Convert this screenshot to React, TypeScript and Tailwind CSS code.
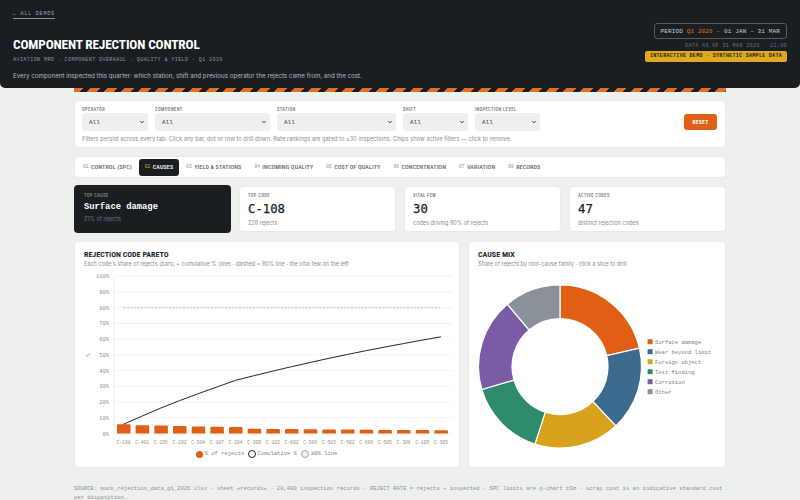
import { ChevronDown } from "lucide-react";

const mono = "font-['Liberation_Mono',monospace]";
const head = "font-['Roboto',sans-serif] [font-stretch:75%]";

const filters = [
  { label: "OPERATOR", width: "w-[66px]" },
  { label: "COMPONENT", width: "w-[115px]" },
  { label: "STATION", width: "w-[119px]" },
  { label: "SHIFT", width: "w-[65px]" },
  { label: "INSPECTION LEVEL", width: "w-[65px]" },
];

const tabs = [
  ["01", "CONTROL (SPC)"],
  ["02", "CAUSES"],
  ["03", "YIELD & STATIONS"],
  ["04", "INCOMING QUALITY"],
  ["05", "COST OF QUALITY"],
  ["06", "CONCENTRATION"],
  ["07", "VARIATION"],
  ["08", "RECORDS"],
];

const kpis = [
  { label: "TOP CODE", value: "C-108", sub: "228 rejects" },
  { label: "VITAL FEW", value: "30", sub: "codes driving 80% of rejects" },
  { label: "ACTIVE CODES", value: "47", sub: "distinct rejection codes" },
];

const codes = [
  "C-108", "C-401", "C-205", "C-202", "C-504", "C-107", "C-304", "C-309", "C-103",
  "C-602", "C-506", "C-503", "C-502", "C-606", "C-505", "C-306", "C-105", "C-305",
];
const shares = [5.9, 5.2, 5.1, 4.7, 4.4, 4.3, 4.2, 3.0, 2.9, 2.8, 2.7, 2.6, 2.5, 2.4, 2.3, 2.2, 2.2, 2.1];

// chart coords are page pixels minus the svg origin
const plotLeft = 39;
const slot = 18.67;
const yOf = (pct: number) => 165.5 - pct * 1.572;

const ParetoChart = () => {
  let total = 0;
  const points = shares.map((s, i) => {
    total += s;
    return `${plotLeft + 9.5 + i * slot},${yOf(total)}`;
  });
  return (
    <svg width="384" height="182" viewBox="0 0 384 182" className={`block ${mono}`}>
      {[0, 10, 20, 30, 40, 50, 60, 70, 80, 90, 100].map((t) => (
        <g key={t}>
          <line x1={plotLeft} x2={377} y1={yOf(t)} y2={yOf(t)} stroke="#eef0ee" strokeWidth="0.8" />
          <text x={plotLeft - 5} y={yOf(t) + 2} textAnchor="end" fontSize="5.4" fill="#8a8f94">
            {t}%
          </text>
        </g>
      ))}
      <line x1={plotLeft} x2={plotLeft} y1={yOf(100)} y2={yOf(0)} stroke="#e6e8e6" strokeWidth="0.8" />
      <text x={13} y={89} textAnchor="middle" fontSize="5.4" fill="#8a8f94" transform="rotate(-90 13 87)">
        %
      </text>
      <line x1={plotLeft + 9.5} x2={367} y1={yOf(80)} y2={yOf(80)} stroke="#a4a9ad" strokeWidth="0.7" strokeDasharray="2 1.5" />
      {shares.map((s, i) => {
        const h = s * 1.572;
        const x = plotLeft + 3 + i * slot;
        return <path key={i} d={`M${x} ${yOf(0)}v${-h + 1}q0 -1 1 -1h11.5q1 0 1 1v${h - 1}z`} fill="#e05f14" />;
      })}
      <polyline points={points.join(" ")} fill="none" stroke="#23272b" strokeWidth="1" />
      {codes.map((c, i) => (
        <text key={c} x={plotLeft + 9.5 + i * slot} y={176} textAnchor="middle" fontSize="4.67" fill="#8a8f94">
          {c}
        </text>
      ))}
    </svg>
  );
};

const slices = [
  { name: "Surface damage", from: 0, to: 77, color: "#e05f14" },
  { name: "Wear beyond limit", from: 77, to: 136.8, color: "#3d6a8f" },
  { name: "Foreign object", from: 136.8, to: 197.9, color: "#d9a21b" },
  { name: "Test finding", from: 197.9, to: 253.6, color: "#2e8b6d" },
  { name: "Corrosion", from: 253.6, to: 319.8, color: "#7b5aa6" },
  { name: "Other", from: 319.8, to: 360, color: "#8a9199" },
];

const polar = (r: number, deg: number) => {
  const a = (deg * Math.PI) / 180;
  return `${91 + r * Math.sin(a)} ${98.5 - r * Math.cos(a)}`;
};

const DonutChart = () => (
  <svg width="256" height="198" viewBox="0 0 256 198" className={`block ${mono}`}>
    {slices.map((s) => (
      <path
        key={s.name}
        d={`M${polar(81.5, s.from)}A81.5 81.5 0 0 1 ${polar(81.5, s.to)}L${polar(48, s.to)}A48 48 0 0 0 ${polar(48, s.from)}Z`}
        fill={s.color}
        stroke="#fff"
        strokeWidth="1.2"
      />
    ))}
    {slices.map((s, i) => (
      <g key={s.name}>
        <rect x={178.6} y={71.2 + i * 10} width="5" height="5" fill={s.color} />
        <text x={186} y={75.5 + i * 10} fontSize="5.5" fill="#7c8288">
          {s.name}
        </text>
      </g>
    ))}
  </svg>
);

export default function App() {
  return (
    <div className="min-h-screen bg-[#eef0ee] font-['Inter',sans-serif] text-[#1a1e23]">
      <header className="flex h-[88px] justify-between rounded-b-[5px] bg-[#1a1e23] pl-[13px] pr-[13px] pt-[10px]">
        <div>
          <a className={`${mono} mt-[1px] block w-fit border-b border-[#8b9096] text-[5px] leading-[7px] tracking-[0.8px] text-[#a2a7ac]`}>
            ← ALL DEMOS
          </a>
          <h1 className={`${head} mt-[17px] text-[13.3px] font-bold leading-[17px] tracking-[-0.15px] text-white`}>
            COMPONENT REJECTION CONTROL
          </h1>
          <p className={`${mono} mt-[3px] text-[5px] leading-[8px] tracking-[0.44px] text-[#8f949a]`}>
            AVIATION MRO · COMPONENT OVERHAUL · QUALITY &amp; YIELD · Q1 2026
          </p>
          <p className="mt-[7px] text-[6.2px] leading-[9px] text-[#b4b8bc]">
            Every component inspected this quarter: which station, shift and previous operator the rejects came from, and the cost.
          </p>
        </div>
        <div className={`${mono} flex flex-col items-end pt-[13px]`}>
          <div className="flex h-[16px] items-center rounded-[3px] border border-[#565b61] px-[6px] text-[6px] tracking-[0.13px] text-[#c9ccd0]">
            <span>PERIOD&nbsp;</span>
            <span className="text-[#e0701f]">Q1 2026</span>
            <span>&nbsp;· 01 JAN – 31 MAR</span>
          </div>
          <div className="mt-[3px] text-[5px] leading-[8px] tracking-[0.4px] text-[#6b7076]">DATA AS OF 31 MAR 2026 · 22:00</div>
          <div className="mt-[1px] flex h-[11px] items-center rounded-[2px] bg-[#e0a91f] px-[5px] text-[5px] font-bold tracking-[0.3px] text-[#1a1e23]">
            INTERACTIVE DEMO · SYNTHETIC SAMPLE DATA
          </div>
        </div>
      </header>

      <div className="mx-auto w-[652px]">
        <div className="h-[4px] bg-[repeating-linear-gradient(135deg,#e0701f_0,#e0701f_7px,#1a1e23_7px,#1a1e23_12px)]" />

        <main className="flex flex-col pt-[8px]">
          <section className="h-[48px] rounded-[4px] border border-[#e9ebe9] bg-white px-[7px] pt-[5px]">
            <div className="flex items-end gap-[7px]">
              {filters.map((f) => (
                <label key={f.label} className="flex flex-col">
                  <span className={`${head} text-[4.5px] font-medium leading-[7px] tracking-[0.4px] text-[#6d7379]`}>{f.label}</span>
                  <span className="relative block">
                    <select className={`${mono} ${f.width} block h-[18px] appearance-none rounded-[3px] bg-[#eef0ee] pl-[7px] text-[6px] text-[#3c4147]`}>
                      <option>All</option>
                    </select>
                    <ChevronDown size={6} strokeWidth={3.5} className="pointer-events-none absolute right-[3px] top-[6px] text-[#1a1e23]" />
                  </span>
                </label>
              ))}
              <button className={`${head} mb-[1px] ml-auto mr-[1px] h-[16px] w-[33px] rounded-[3px] bg-[#e05f14] text-[5.5px] font-bold tracking-[0.3px] text-white`}>
                RESET
              </button>
            </div>
            <p className="mt-[4px] text-[5.76px] leading-[8px] text-[#8a8f94]">
              Filters persist across every tab. Click any bar, dot or row to drill down. Rate rankings are gated to ≥30 inspections. Chips show active filters — click to remove.
            </p>
          </section>

          <nav className="mt-[8px] flex h-[22px] items-center gap-[1px] rounded-[4px] border border-[#e9ebe9] bg-white pl-[2px]">
            {tabs.map(([n, t]) => (
              <div
                key={n}
                className={`flex h-[17px] items-center gap-[2.5px] rounded-[3px] px-[6px] ${t === "CAUSES" ? "bg-[#1a1e23] text-white" : "text-[#5f656b]"}`}
              >
                <span className={`${mono} text-[4.5px] leading-none ${t === "CAUSES" ? "text-[#e0a91f]" : "text-[#8a8f94]"}`}>{n}</span>
                <span className={`${head} whitespace-nowrap text-[6.1px] font-medium leading-none tracking-[0.12px]`}>{t}</span>
              </div>
            ))}
          </nav>

          <section className="mt-[7px] grid grid-cols-4 gap-[8px]">
            <div className="flex h-[48px] flex-col rounded-[4px] bg-[#1a1e23] pl-[10px] pt-[8px]">
              <span className={`${head} text-[4.5px] font-medium leading-[6px] tracking-[0.4px] text-[#8a8f94]`}>TOP CAUSE</span>
              <span className={`${mono} mt-[2px] text-[8.8px] font-bold leading-[13px] text-white`}>Surface damage</span>
              <span className="mt-[0.5px] text-[5.5px] leading-[8px] text-[#6b7076]">21% of rejects</span>
            </div>
            {kpis.map((k) => (
              <div key={k.label} className="my-[1px] flex flex-col rounded-[4px] border border-[#e9ebe9] bg-white pl-[8px] pt-[6px]">
                <span className={`${head} text-[4.5px] font-medium leading-[6px] tracking-[0.4px] text-[#6d7379]`}>{k.label}</span>
                <span className="mt-[1px] font-['DejaVu_Sans_Mono',monospace] text-[12.3px] leading-[18px] text-[#1a1e23] [-webkit-text-stroke:0.25px_#1a1e23]">{k.value}</span>
                <span className="mt-[1px] text-[5.5px] leading-[8px] text-[#8a8f94]">{k.sub}</span>
              </div>
            ))}
          </section>

          <section className="mt-[8px] grid h-[227px] grid-cols-[1.5fr_1fr] gap-[8px]">
            <div className="rounded-[4px] border border-[#e9ebe9] bg-white">
              <div className="pl-[9px] pt-[7px]">
                <h2 className={`${head} text-[8px] font-bold leading-[11px] text-[#23272b]`}>REJECTION CODE PARETO</h2>
                <p className="mt-[1px] text-[5.5px] leading-[7px] text-[#8a8f94]">
                  Each code's share of rejects (bars) + cumulative % (line) · dashed = 80% line · the vital few on the left
                </p>
              </div>
              <ParetoChart />
              <div className={`${mono} flex justify-center gap-[3px] pr-[1px] text-[5.5px] leading-[8px] text-[#7c8288]`}>
                <span className="flex items-center gap-[2px]">
                  <i className="h-[7px] w-[7px] rounded-full bg-[#e05f14]" />% of rejects
                </span>
                <span className="ml-[1px] flex items-center gap-[1px]">
                  <i className="h-[8px] w-[8px] rounded-full border border-[#1a1e23]" />Cumulative %
                </span>
                <span className="ml-[1px] flex items-center gap-[2px]">
                  <i className="h-[8px] w-[8px] rounded-full border border-[#a4a9ad] bg-[#eef0ee]" />80% line
                </span>
              </div>
            </div>
            <div className="rounded-[4px] border border-[#e9ebe9] bg-white">
              <div className="pl-[9px] pt-[7px]">
                <h2 className={`${head} text-[8px] font-bold leading-[11px] text-[#23272b]`}>CAUSE MIX</h2>
                <p className="mt-[1px] text-[5.5px] leading-[7px] text-[#8a8f94]">
                  Share of rejects by root-cause family · click a slice to drill
                </p>
              </div>
              <DonutChart />
            </div>
          </section>

          <footer className={`${mono} pt-[17px] text-[5.4px] leading-[9px] tracking-[0.09px] text-[#8a8f94]`}>
            SOURCE: mock_rejection_data_q1_2026.xlsx · sheet «records» · 28,400 inspection records · REJECT RATE = rejects ÷ inspected · SPC limits are p-chart ±3σ · scrap cost is an indicative standard cost per disposition.
          </footer>
        </main>
      </div>
    </div>
  );
}
